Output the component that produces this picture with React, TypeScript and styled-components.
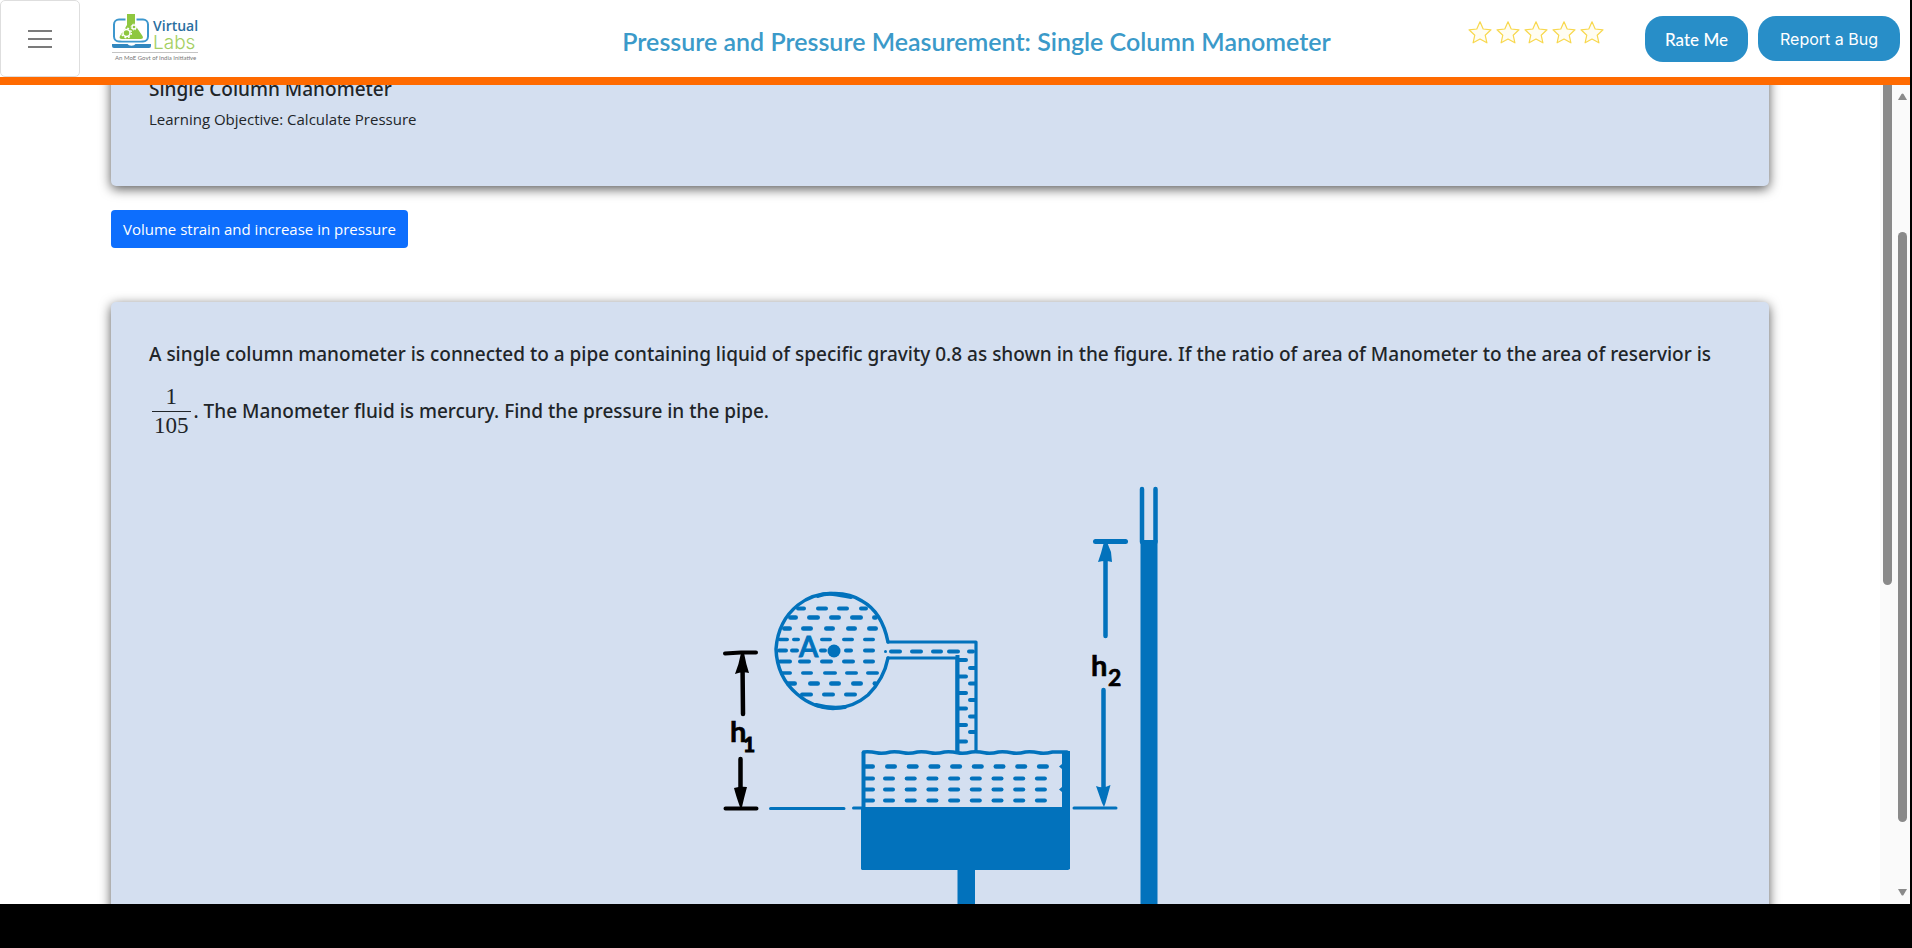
import React from "react";
import styled, { createGlobalStyle } from "styled-components";

const blue = "#0272bc";
const ink = "#212529";
const bodyFont = `"Open Sans", "Noto Sans", sans-serif`;

const GlobalStyle = createGlobalStyle`
  *, *::before, *::after { box-sizing: border-box; }
  body { margin: 0; background: #000; color: ${ink}; font-family: ${bodyFont}; }
`;

const Page = styled.div`
  display: grid;
  grid-template-rows: auto minmax(0, 1fr);
  height: 100vh;
  padding: 0 2px 44px 0;
  background: #000;
`;

const Header = styled.header`
  display: flex;
  align-items: flex-start;
  height: 85px;
  padding-right: 10px;
  background: #fff;
  border-bottom: 8px solid #ff6a00;
`;

const MenuButton = styled.button`
  display: flex;
  flex-direction: column;
  align-items: center;
  justify-content: center;
  gap: 6px;
  flex: none;
  width: 80px;
  height: 77px;
  padding: 0;
  border: 1px solid #dedede;
  border-radius: 5px;
  background: #fff;
`;

const MenuLine = styled.span`
  width: 24px;
  height: 2px;
  background: #7b7b7b;
`;

const Brand = styled.a`
  flex: 0 0 405px;
  padding: 12px 0 0 30px;
`;

const Title = styled.h1`
  flex: 1;
  margin: 0;
  padding-top: 25px;
  color: #3b9ac9;
  font: 600 25px/32px Lato, sans-serif;
  text-align: center;
`;

const Rating = styled.div`
  display: flex;
  gap: 4px;
  margin: 21px 41px 0 0;
`;

const Actions = styled.div`
  display: flex;
  align-items: flex-start;
  gap: 10px;
  padding-top: 16px;
`;

const ActionButton = styled.button<{ $bold?: boolean }>`
  height: ${(p) => (p.$bold ? 46 : 45)}px;
  padding: 0 ${(p) => (p.$bold ? 20 : 22)}px;
  border: 0;
  border-radius: 18px;
  background: #288ec8;
  color: #fff;
  font: ${(p) => (p.$bold ? "500 17px Lato" : "400 16px Inter")}, sans-serif;
`;

const Viewport = styled.div`
  display: grid;
  grid-template-columns: minmax(0, 1fr) 15px 15px;
  overflow: hidden;
  background: #fff;
`;

const Content = styled.main`
  display: flex;
  flex-direction: column;
  align-items: flex-start;
  min-height: 0;
  overflow: hidden;
  padding: 0 111px;
`;

const Card = styled.section`
  flex: none;
  width: 100%;
  padding: 38px;
  border-radius: 5px;
  background: #d4dff0;
  box-shadow: 0 3px 12px rgba(0, 0, 0, 0.66);
`;

const IntroCard = styled(Card)`
  margin-top: -48px;
`;

const Heading = styled.h2`
  margin: 0;
  font: 500 19px/28px "Noto Sans", sans-serif;
`;

const Objective = styled.p`
  margin: 4px 0 17px;
  font-size: 15px;
  line-height: 24px;
`;

const PrimaryButton = styled.button`
  flex: none;
  height: 38px;
  margin: 24px 0 54px;
  padding: 0 12px;
  border: 0;
  border-radius: 4px;
  background: #0d6efd;
  color: #fff;
  font: 400 15px/24px ${bodyFont};
`;

const Fraction = styled.span`
  display: inline-flex;
  flex-direction: column;
  align-items: center;
  margin: 15px 3px 17px;
  vertical-align: middle;
  font: 400 23px/28px "Liberation Serif", serif;
`;

const Numerator = styled.span`
  align-self: stretch;
  border-bottom: 1px solid ${ink};
  text-align: center;
`;

const Denominator = styled.span`
  padding: 0 2px;
`;

const Figure = styled.svg`
  display: block;
  width: 442px;
  height: 500px;
  margin: 28px auto 0;
`;

const Track = styled.div`
  display: flex;
  flex-direction: column;
  align-items: center;
  background: #fafafa;
`;

const InnerThumb = styled.div`
  width: 9px;
  height: 61%;
  border-radius: 0 0 5px 5px;
  background: #8a8a8a;
`;

const OuterTrack = styled(Track)`
  justify-content: space-between;
  padding: 8px 0;
`;

const OuterThumb = styled.div`
  width: 9px;
  height: 82%;
  margin-top: 63px;
  border-radius: 5px;
  background: #8a8a8a;
`;

const ThumbGroup = styled.div`
  flex: 1;
  min-height: 0;
  padding-top: 69px;
`;

function Logo() {
  return (
    <svg width="90" height="52" viewBox="110 12 90 52" aria-label="Virtual Labs">
      <rect x="114" y="19.5" width="34" height="22" rx="5" fill="none" stroke="#3d97cd" strokeWidth="2" />
      <path d="M127 14h8v11l7.500 11q1.500 3-2 3h-18.500q-3.500 0-2-3l7-11z" fill="#8fc740" stroke="#fff" strokeWidth="3" paintOrder="stroke" />
      <circle cx="126.500" cy="33" r="3.500" fill="none" stroke="#fff" strokeWidth="1.500" />
      <circle cx="126.500" cy="33" r="4.800" fill="none" stroke="#fff" strokeWidth="1.500" strokeDasharray="1.900 1.900" />
      <circle cx="134" cy="27" r="2" fill="none" stroke="#fff" strokeWidth="1.300" />
      <circle cx="134" cy="27" r="3" fill="none" stroke="#fff" strokeWidth="1" strokeDasharray="1.200 1.200" />
      <path d="M112 44h15.500q1 1.800 4 1.800t4-1.800H151v2q0 2-2 2H114q-2 0-2-2z" fill="#3187bf" />
      <text x="153" y="31" fill="#2a6f9f" fontFamily="Open Sans" fontSize="14" fontWeight="600">Virtual</text>
      <text x="153" y="48.500" fill="#a4cf62" fontFamily="Inter" fontSize="19" fontWeight="300">Labs</text>
      <path d="M112 52.500h86" stroke="#c4c4c4" />
      <text x="115" y="60" fill="#777" fontFamily="Lato" fontSize="6">An MoE Govt of India Initiative</text>
    </svg>
  );
}

function Star() {
  return (
    <svg width="24" height="24" viewBox="-12 -12 24 24">
      <path d="M0-11.200 3.200-4 11-3.200 5.200 2.200 6.900 9.800 0 6-6.900 9.800-5.200 2.200-11-3.200-3.200-4z" fill="#fffdf2" stroke="#f8d84e" strokeWidth="1.200" strokeLinejoin="round" />
    </svg>
  );
}

/* Liquid marks: [y, thickness, [start, length]...] for each row. */
const pipeRows: [number, number, [number, number][]][] = [
  [609.5, 4, [[796, 10], [816, 12], [837, 12], [859, 9]]],
  [618.500, 4.500, [[788, 10], [807, 13], [829, 12], [850, 13], [872, 6]]],
  [629.500, 4.500, [[782, 10], [801, 12], [824, 11], [846, 11], [867, 11]]],
  [640.500, 3.500, [[778, 11], [792, 8], [820, 12], [842, 12], [863, 12]]],
  [651.500, 4, [[777, 11], [790, 9], [819, 8], [844, 9], [863, 12]]],
  [662.500, 4, [[778, 14], [798, 13], [820, 13], [842, 13], [863, 12]]],
  [674, 3.500, [[780, 12], [801, 12], [823, 14], [845, 13], [866, 13]]],
  [684.500, 4.500, [[786, 11], [808, 12], [829, 12], [851, 12], [873, 4]]],
  [695.500, 4, [[800, 13], [822, 13], [844, 13]]],
];

const tankRows: [number, number, number][] = [
  [767.5, 4.500, 885],
  [779.500, 4, 883],
  [790.500, 4, 883],
  [801.500, 4, 883],
];

function Dash({ x, y, length, width = 4 }: { x: number; y: number; length: number; width?: number }) {
  const r = width / 2;
  return <path d={`M${x + r} ${y}h${length - width}`} stroke={blue} strokeWidth={width} strokeLinecap="round" />;
}

function Manometer() {
  return (
    <Figure viewBox="719 486 442 500" role="img" aria-label="Single column manometer">
      <g fill="none" stroke={blue} strokeLinecap="round" strokeLinejoin="round">
        <path d="M888 643H976V752M888 659H957V752" strokeWidth="3.200" />
        <path d="M888 643Q882 613 862 602Q850 594 833 594.500Q813 594 798 606Q778 622 776 650Q777 678 797 695Q813 709 833 709.500Q853 709 868 696Q884 680 888 659" strokeWidth="3.500" />
        <path d="M818 597q8-3 15-2t18 3M816 706q15 4 29 2" strokeWidth="4" />
        <path d={"M863.500 753" + "q7-.5 13 .8t14-.8".repeat(7) + "L1067 753"} strokeWidth="3.500" />
      </g>
      {pipeRows.map(([y, w, marks]) => marks.map(([x, l]) => <Dash key={`${x}-${y}`} x={x} y={y} length={l} width={w} />))}
      {[[884, 3], [889, 13], [910, 13], [931, 12], [947, 13], [967, 8]].map(([x, l]) => (
        <Dash key={x} x={x} y={652.5} length={l} width={x === 884 ? 3 : 4} />
      ))}
      {[661, 677.500, 694, 709.500, 726, 742.500].map((y) => <Dash key={y} x={956} y={y} length={12} />)}
      {[669, 684.500, 701, 717.500, 733].map((y) => <Dash key={y} x={968} y={y} length={9} />)}
      {tankRows.map(([y, w, x]) => (
        <g key={y}>
          <Dash x={863} y={y} length={12} width={w} />
          {Array.from({ length: 8 }, (_, i) => <Dash key={i} x={x + i * 21.7} y={y} length={12} width={w} />)}
        </g>
      ))}
      <path d="M957.500 656V753M863.500 753V809" stroke={blue} strokeWidth="4" />
      <path d="M1062 752h8v118l-2 1H862l-1-1V808h201v-15l-3-2.500 3-2.500v-18l-3-2.500 3-2.500z" fill={blue} />
      <path d="M957.500 868h17.500V986h-17.500zM1140.500 541h17V986h-17z" fill={blue} />
      <path d="M1142 490v53M1155.500 490v53" stroke={blue} strokeWidth="4.500" strokeLinecap="round" />
      <path d="M770.500 809.500h73.500M853.500 809h10M1074 809h42" stroke={blue} strokeWidth="3" strokeLinecap="round" />
      <path d="M1095.500 542.500h30" stroke={blue} strokeWidth="5" strokeLinecap="round" />
      <path d="M1105.500 555v82M1103.500 691v105" stroke={blue} strokeWidth="4.500" strokeLinecap="round" />
      <path d="M1104 543h3l4 10 1 10q-7-2-14 0l3-9zM1096 787q7 3 14.500-1l-5 18-1.500 4-2-4z" fill={blue} />
      <g stroke="#000" strokeLinecap="round">
        <path d="M725 654.500l16-1h15M725.500 809.500h31" strokeWidth="4" />
        <path d="M742.500 664l.500 51M740.500 760v36" strokeWidth="4.500" />
      </g>
      <path d="M741 654h3q2 11 5 20-7-2-14 1 4-10 6-21zM734 789q7-2 13-1-3 11-5 20h-2q-4-11-6-19z" fill="#000" />
      <circle cx="834" cy="652" r="6.500" fill={blue} />
      <text x="799" y="658" fill={blue} stroke={blue} strokeWidth="1" fontFamily="Lato" fontSize="28" fontWeight="600">A</text>
      <g fontFamily="Lato" fontSize="29" fontWeight="700" fill="#000" stroke="#000" strokeWidth="0.6">
        <text x="730" y="743">h</text>
        <text x="743" y="753" fontSize="21" strokeWidth="1">1</text>
        <text x="1091" y="677">h</text>
        <text x="1108" y="687" fontSize="23">2</text>
      </g>
    </Figure>
  );
}

function Arrow({ down }: { down?: boolean }) {
  return (
    <svg width="9" height="7" viewBox="0 0 9 7">
      <path d={down ? "M0 0h9L5.500 6q-1 1-2 0z" : "M0 7h9L5.500 1q-1-1-2 0z"} fill="#8a8a8a" />
    </svg>
  );
}

export default function App() {
  return (
    <Page>
      <GlobalStyle />
      <Header>
        <MenuButton aria-label="Menu">
          <MenuLine />
          <MenuLine />
          <MenuLine />
        </MenuButton>
        <Brand href="#" aria-label="Virtual Labs home">
          <Logo />
        </Brand>
        <Title>Pressure and Pressure Measurement: Single Column Manometer</Title>
        <Rating role="img" aria-label="Rating out of five stars">
          {[1, 2, 3, 4, 5].map((n) => <Star key={n} />)}
        </Rating>
        <Actions>
          <ActionButton $bold>Rate Me</ActionButton>
          <ActionButton>Report a Bug</ActionButton>
        </Actions>
      </Header>
      <Viewport>
        <Content>
          <IntroCard>
            <Heading>Single Column Manometer</Heading>
            <Objective>Learning Objective: Calculate Pressure</Objective>
          </IntroCard>
          <PrimaryButton>Volume strain and increase in pressure</PrimaryButton>
          <Card>
            <Heading>
              A single column manometer is connected to a pipe containing liquid of specific gravity 0.8 as shown in the
              figure. If the ratio of area of Manometer to the area of reservior is{" "}
              <Fraction>
                <Numerator>1</Numerator>
                <Denominator>105</Denominator>
              </Fraction>
              . The Manometer fluid is mercury. Find the pressure in the pipe.
            </Heading>
            <Manometer />
          </Card>
        </Content>
        <Track>
          <InnerThumb />
        </Track>
        <OuterTrack>
          <Arrow />
          <ThumbGroup>
            <OuterThumb />
          </ThumbGroup>
          <Arrow down />
        </OuterTrack>
      </Viewport>
    </Page>
  );
}
